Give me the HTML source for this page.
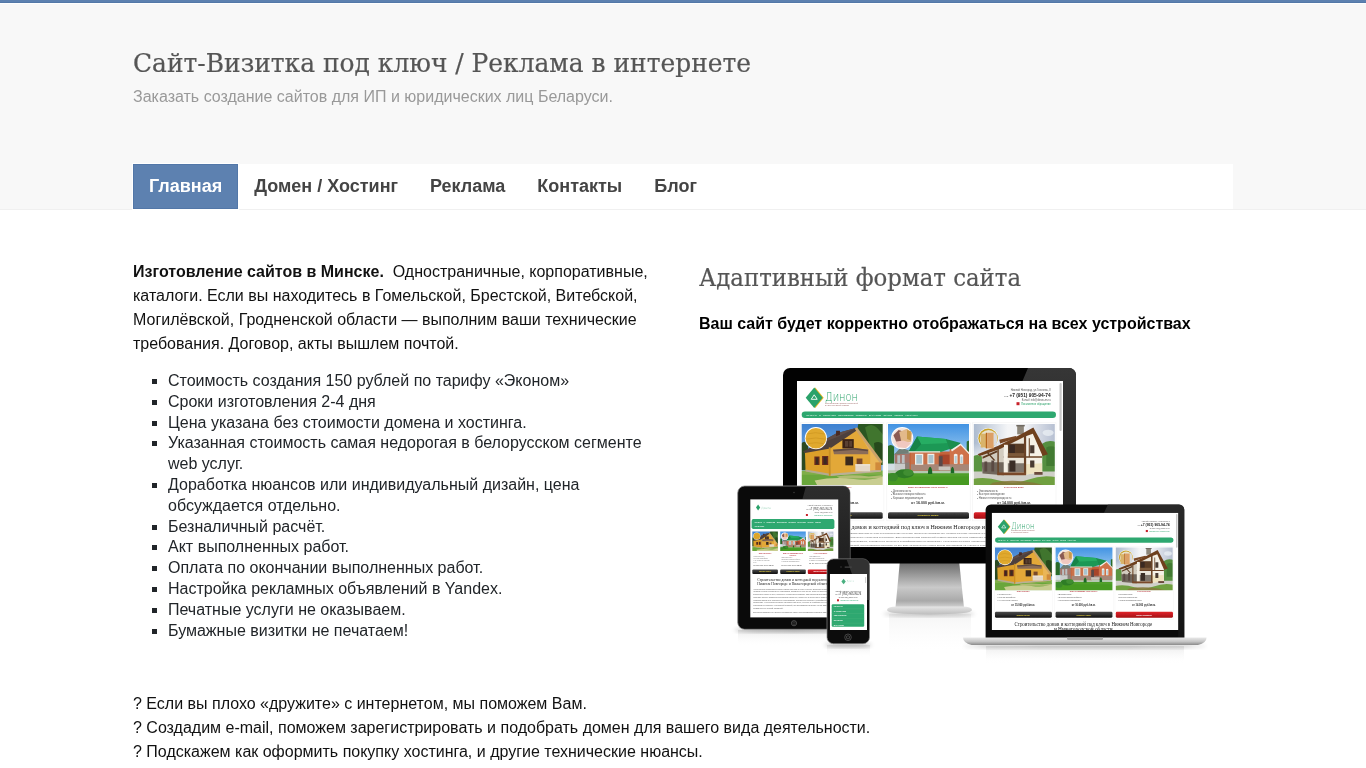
<!DOCTYPE html>
<html lang="ru">
<head>
<meta charset="utf-8">
<title>Сайт-Визитка под ключ / Реклама в интернете</title>
<style>
*{box-sizing:border-box}
html,body{margin:0;padding:0}
body{width:1366px;height:768px;overflow:hidden;background:#fff;font-family:"Liberation Sans",Arial,sans-serif;font-size:16px;color:#111;position:relative}
#top{position:absolute;left:0;top:0;width:1366px;height:210px;background:#f8f8f8;border-bottom:1px solid #f0f0f0}
#top:before{content:"";position:absolute;left:0;top:0;width:100%;height:4px;background:linear-gradient(#5d81b0 0,#5d81b0 2px,#5378a8 2px,#5378a8 3px,#fff 3px,#fff 4px)}
#title{position:absolute;left:133px;top:44px;width:640px;height:36px}
#title text{font-family:"DejaVu Serif Condensed","DejaVu Serif","Liberation Serif",serif;font-size:25.5px;fill:#555;stroke:#555;stroke-width:.2px}
#sub{position:absolute;left:133px;top:87px;font-size:16px;line-height:20px;color:#999;white-space:nowrap}
#nav{position:absolute;left:133px;top:164px;width:1100px;height:45px;background:#fff;display:flex}
#nav a{display:block;height:45px;line-height:45px;padding:0 16px;font-weight:bold;font-size:18px;color:#444;text-decoration:none;white-space:nowrap}
#nav a.on{background:#5d81b0;color:#fff;box-shadow:inset 0 0 0 1px #5277a8,0 0 0 1px #fff}
#left{position:absolute;left:133px;top:260px;width:540px}
#left p{margin:0;line-height:24px}
ul{margin:15px 0 0 0;padding:0 0 0 35px;list-style:square;line-height:20.8px;color:#212529}
#h2{position:absolute;left:699px;top:260px;width:400px;height:36px}
#h2 text{font-family:"DejaVu Serif Condensed","DejaVu Serif","Liberation Serif",serif;font-size:23.6px;fill:#555;stroke:#555;stroke-width:.2px}
#bold{position:absolute;left:699px;top:312px;font-weight:bold;line-height:24px;white-space:nowrap;color:#000}
#q{position:absolute;left:133px;top:692px;line-height:24px;white-space:nowrap}
#top,#left,#bold,#q,#h2{will-change:transform}
#pic{position:absolute;left:716px;top:340px;width:500px;height:333px}
</style>
</head>
<body>
<div id="top">
<svg id="title" viewBox="0 0 640 36"><text x="0" y="28" textLength="618" lengthAdjust="spacingAndGlyphs">Сайт-Визитка под ключ / Реклама в интернете</text></svg>
<div id="sub">Заказать создание сайтов для ИП и юридических лиц Беларуси.</div>
<div id="nav"><a class="on">Главная</a><a>Домен / Хостинг</a><a>Реклама</a><a>Контакты</a><a>Блог</a></div>
</div>
<div id="left">
<p><b>Изготовление сайтов в Минске.</b>&nbsp; Одностраничные, корпоративные, каталоги. Если вы находитесь в Гомельской, Брестской, Витебской, Могилёвской, Гродненской области — выполним ваши технические требования. Договор, акты вышлем почтой.</p>
<ul>
<li>Стоимость создания 150 рублей по тарифу «Эконом»</li>
<li>Сроки изготовления 2-4 дня</li>
<li>Цена указана без стоимости домена и хостинга.</li>
<li>Указанная стоимость самая недорогая в белорусском сегменте web услуг.</li>
<li>Доработка нюансов или индивидуальный дизайн, цена обсуждается отдельно.</li>
<li>Безналичный расчёт.</li>
<li>Акт выполненных работ.</li>
<li>Оплата по окончании выполненных работ.</li>
<li>Настройка рекламных объявлений в Yandex.</li>
<li>Печатные услуги не оказываем.</li>
<li>Бумажные визитки не печатаем!</li>
</ul>
</div>
<svg id="h2" viewBox="0 0 400 36"><text x="0" y="26" textLength="322" lengthAdjust="spacingAndGlyphs">Адаптивный формат сайта</text></svg>
<div id="bold">Ваш сайт будет корректно отображаться на всех устройствах</div>
<div id="q">? Если вы плохо «дружите» с интернетом, мы поможем Вам.<br>? Создадим e-mail, поможем зарегистрировать и подобрать домен для вашего вида деятельности.<br>? Подскажем как оформить покупку хостинга, и другие технические нюансы.</div>
<!--PICSTART--><svg id="pic" viewBox="716 340 500 333">
<defs>
<linearGradient id="sky1" x1="0" y1="0" x2="0" y2="1"><stop offset="0" stop-color="#3a7fd0"/><stop offset="1" stop-color="#a4c8ec"/></linearGradient>
<linearGradient id="sky2" x1="0" y1="0" x2="0" y2="1"><stop offset="0" stop-color="#3c8fe2"/><stop offset="0.7" stop-color="#bfe1f6"/></linearGradient>
<linearGradient id="sky3" x1="0" y1="0" x2="0" y2="1"><stop offset="0" stop-color="#c9d6e4"/><stop offset="0.6" stop-color="#f3f5f7"/></linearGradient>
<linearGradient id="sky3h" x1="0" y1="0" x2="1" y2="0"><stop offset="0" stop-color="#a9b8cd"/><stop offset=".42" stop-color="#f4f5f7"/><stop offset=".62" stop-color="#f1f2f5"/><stop offset="1" stop-color="#b3bdd0"/></linearGradient>
<linearGradient id="sky3v" x1="0" y1="0" x2="0" y2="1"><stop offset="0" stop-color="#f4f5f7" stop-opacity="0"/><stop offset="1" stop-color="#f4f5f7"/></linearGradient>
<linearGradient id="neck" x1="0" y1="0" x2="0" y2="1"><stop offset="0" stop-color="#6d6d6d"/><stop offset="0.55" stop-color="#c9c9c9"/><stop offset="0.85" stop-color="#a9a9a9"/><stop offset="1" stop-color="#d4d4d4"/></linearGradient>
<linearGradient id="plate" x1="0" y1="0" x2="0" y2="1"><stop offset="0" stop-color="#e6e6e6"/><stop offset="1" stop-color="#bdbdbd"/></linearGradient>
<linearGradient id="glare" x1="0" y1="0" x2="0" y2="1"><stop offset="0" stop-color="#363636"/><stop offset="1" stop-color="#161616"/></linearGradient>
<linearGradient id="lapbase" x1="0" y1="0" x2="0" y2="1"><stop offset="0" stop-color="#e9e9e9"/><stop offset="0.55" stop-color="#c4c4c4"/><stop offset="1" stop-color="#8a8a8a"/></linearGradient>
<linearGradient id="refl" x1="0" y1="0" x2="0" y2="1"><stop offset="0" stop-color="#cfcfcf" stop-opacity=".75"/><stop offset="1" stop-color="#fff" stop-opacity="0"/></linearGradient>
<linearGradient id="btn" x1="0" y1="0" x2="0" y2="1"><stop offset="0" stop-color="#4a4a4a"/><stop offset="1" stop-color="#121212"/></linearGradient>
<linearGradient id="btnr" x1="0" y1="0" x2="0" y2="1"><stop offset="0" stop-color="#e0242b"/><stop offset="1" stop-color="#a50d13"/></linearGradient>
<filter id="soft" x="-5%" y="-5%" width="110%" height="110%"><feGaussianBlur stdDeviation="0.62"/></filter>
<filter id="soft2" x="-20%" y="-50%" width="140%" height="200%"><feGaussianBlur stdDeviation="2"/></filter>
<filter id="pblur" x="-5%" y="-5%" width="110%" height="110%"><feGaussianBlur stdDeviation="0.45"/></filter>
<clipPath id="c81"><rect x="0" y="0" width="81" height="61"/></clipPath>


<g id="ph1" clip-path="url(#c81)"><g filter="url(#pblur)">
<rect x="-2" y="-2" width="85" height="65" fill="url(#sky1)"/>
<g transform="scale(.1292) translate(-30 -33)">
<path d="M470 20h200v330H560L470 200q-30-60-10-120z" fill="#2c5722"/>
<path d="M520 60q50-40 90 0t50 60v160h-80z" fill="#41742f"/>
<path d="M590 180q40-20 70 10v120h-60z" fill="#25491c"/>
<path d="M20 190q30-40 60 0v200H20z" fill="#2b4a22"/>
<path d="M20 395h650v120H20z" fill="#69a63a"/>
<path d="M20 395h650v30H20z" fill="#7fae4a"/>
<path d="M130 470q150-30 300-12t230-20v70H150z" fill="#d9d3a0" opacity=".85"/>
<path d="M300 440q120-20 250 0l100-10v25H330z" fill="#cfc48c" opacity=".7"/>
<path d="M55 250 250 212 250 432 60 398z" fill="#dc9f2b"/>
<path d="M60 385 250 418 250 436 60 400z" fill="#b3aa90"/>
<path d="M250 214 455 76 642 330 642 400 250 434z" fill="#e3a838"/>
<path d="M455 76 642 330 642 400 560 405 560 250z" fill="#eab658"/>
<path d="M250 418 640 388 640 402 250 436z" fill="#b9b098"/>
<path d="M40 246 300 104 458 62 470 74 250 222 56 258z" fill="#4e403c"/>
<path d="M120 205 300 104 458 62 300 135z" fill="#5d4c46"/>
<path d="M440 70 458 58 655 325 640 340z" fill="#caa36a"/>
<path d="M296 86h30v30l-30 12z" fill="#4a2a24"/>
<path d="M345 150h88v72h-88z" fill="#3a2418"/>
<path d="M365 165h25v45h-25zM398 165h22v45h-22z" fill="#5a4030"/>
<path d="M272 232 440 218 545 232 545 268 280 268z" fill="#8a6c58"/>
<path d="M272 232 440 218 545 232 540 244 440 232 280 246z" fill="#5e4a40"/>
<path d="M128 285h40v66h-40zM188 280h48v70h-48z" fill="#6a2c1c"/>
<path d="M140 292h18v52h-18zM200 288h24v56h-24z" fill="#3a2a22"/>
<path d="M368 285h60v68h-60z" fill="#3a2a1e"/>
<path d="M455 300h45v60h-45z" fill="#7a4a2a"/>
<path d="M445 345h115v55H445z" fill="#e4d8c8"/>
<path d="M445 345h115v8H445z" fill="#f4ece0"/>
<path d="M240 214h14v220h-14z" fill="#c98f24"/>
<path d="M600 330h45v60h-45z" fill="#d08a3a"/>
<circle cx="140" cy="143" r="86" fill="#fff"/><circle cx="140" cy="143" r="80" fill="#e0a92e"/>
<path d="M75 110q60-20 130 0M68 150q70-18 144 0M80 185q60-15 120 0" stroke="#c8901e" stroke-width="7" fill="none" opacity=".6"/>
</g></g></g>


<g id="ph2" clip-path="url(#c81)"><g filter="url(#pblur)">
<rect x="-2" y="-2" width="85" height="65" fill="url(#sky2)"/>
<g transform="scale(.1292) translate(-703 -33)">
<path d="M695 210q30-30 55 0v130h-55zM1312 170q15-15 30 0v215h-30z" fill="#2a6a2a"/>
<path d="M695 395h650v120H695z" fill="#4f9f2a"/>
<path d="M695 440h650v75H695z" fill="#479a24"/>
<path d="M695 388h650v26H695z" fill="#b5c8b0"/>
<path d="M755 262h120v130H755z" fill="#8d8078"/>
<path d="M755 262h120v70H755z" fill="#a5746a"/>
<path d="M870 245h460v148H870z" fill="#c4643a"/>
<path d="M880 250h225v145H880z" fill="#c9714a"/>
<path d="M1100 270h90v100h-90z" fill="#a8452c"/>
<path d="M1180 228 1265 192 1328 262 1328 390 1180 390z" fill="#cf7248"/>
<path d="M880 345h450v48H880z" fill="#9a8f88" opacity=".75"/>
<path d="M695 340h140v52H695z" fill="#d8dde0" opacity=".8"/>
<path d="M748 272 800 214 872 240 872 262 760 268z" fill="#6f7f78"/>
<path d="M862 248 928 130 1152 150 1215 215 1105 252z" fill="#1e9855"/>
<path d="M928 130 1152 150 1180 180 960 190z" fill="#27ad64"/>
<path d="M862 248 928 130 960 190 905 250z" fill="#178448"/>
<path d="M1150 150 1268 180 1205 232 1180 228z" fill="#1a8e4e"/>
<path d="M1190 232 1265 184 1335 258 1335 272 1265 198 1198 246z" fill="#f1efe8"/>
<path d="M862 244h245v10H862z" fill="#f0ece4"/>
<path d="M912 264h64v84h-64zM1008 264h54v80h-54z" fill="#f2f0ea"/>
<path d="M922 272h44v68h-44zM1016 272h38v64h-38z" fill="#a9c4cf"/>
<path d="M1096 282h30v80h-30z" fill="#5a4a48"/>
<path d="M1213 270q14-14 28 0v70h-28zM1259 274q13-13 26 0v66h-26z" fill="#f2f0ea"/>
<path d="M1219 280h16v54h-16zM1264 284h16v50h-16z" fill="#b5cdd6"/>
<path d="M775 275h22v62h-22zM810 272h22v64h-22z" fill="#b9c0c4"/>
<path d="M1095 362h90v28h-90z" fill="#c9c4bc"/>
<ellipse cx="830" cy="418" rx="72" ry="34" fill="#2f7d27"/><ellipse cx="740" cy="445" rx="40" ry="32" fill="#3a8a2c"/><ellipse cx="860" cy="410" rx="40" ry="26" fill="#3f8e30"/>
<path d="M1012 420q0-50 17-56 17 6 17 56zM1188 415q0-46 14-52 14 6 14 52z" fill="#1f6a25"/>
<circle cx="813" cy="143" r="86" fill="#fff"/><circle cx="813" cy="143" r="80" fill="#f3e4dc"/>
<path d="M745 120l40-40 30 10v70l-40 30z" fill="#8a5a52"/><path d="M790 95l60-25 40 30-10 70-70 20z" fill="#e2b98a"/><path d="M760 170l60-10 60 20-40 40-60-10z" fill="#f0c8c0"/><path d="M850 80l30 10v70l-30-10z" fill="#c99a4a"/>
</g></g></g>


<g id="ph3" clip-path="url(#c81)"><g filter="url(#pblur)">
<rect x="-2" y="-2" width="85" height="65" fill="#eef1f4"/>
<g transform="scale(.09234) translate(-45 -45)">
<path d="M30 30h910v400H30z" fill="url(#sky3h)"/>
<path d="M30 250h910v200H30z" fill="url(#sky3v)"/>
<ellipse cx="850" cy="140" rx="60" ry="34" fill="#e9edf2" opacity=".8"/>
<path d="M785 260q60-50 150-20v340H785z" fill="#548f40"/>
<path d="M830 300q50-30 105 0v200H830z" fill="#437a33"/>
<path d="M30 400q50-40 110 0v180H30z" fill="#5a9440"/>
<path d="M30 560h910v170H30z" fill="#cfcfc8"/>
<path d="M30 640q150-30 300 20t300-10 300-30v110H30z" fill="#6fa040"/>
<path d="M250 680q200-40 450 0l150 40H200z" fill="#86783a" opacity=".85"/>
<path d="M130 350 370 300 370 600 140 580z" fill="#d2ccbf"/>
<path d="M130 460 370 460 370 600 140 580z" fill="#6f665c"/>
<path d="M370 240 600 160 600 595 370 600z" fill="#ebe6da"/>
<path d="M410 470h190v100H410z" fill="#80776d"/>
<path d="M600 165 690 125 785 365 785 565 600 595z" fill="#f5f1e6"/>
<path d="M600 480 785 470 785 565 600 595z" fill="#efe3c0"/>
<path d="M515 62h72v95h-72z" fill="#8d867a"/><path d="M505 55h92v16h-92z" fill="#6f6a62"/>
<path d="M85 372 310 280 500 185 690 84 848 372 790 392 684 150 600 180 335 312 110 392z" fill="#6e3f1f"/>
<path d="M320 215 500 175 520 195 330 255z" fill="#7a4a28"/>
<path d="M415 258h178v145H415z" fill="#5a3d28"/>
<path d="M430 270h60v90h-60z" fill="#3a2a20"/>
<path d="M410 360h190v45H410z" fill="#7d5a3a"/>
<path d="M588 160h24v435h-24zM370 395h415v16H370zM300 300h16v295h-16zM640 200h12v200h-12z" fill="#6a4326"/>
<path d="M140 400 300 330 300 350 140 420zM200 350l80 90h-20l-80-90z" fill="#5e3c22"/>
<path d="M655 275h46v86h-46zM655 440h46v76h-46z" fill="#4a3a30"/>
<path d="M430 440h66v120h-66z" fill="#3a2e28"/>
<path d="M160 450h30v110h-30zM235 440h30v120h-30z" fill="#5a4a42"/>
<path d="M372 270h40v310h-40z" fill="#f4f0e6"/>
<path d="M300 570h310v30H300z" fill="#7a4a2a"/>
<path d="M700 565h90v30h-90z" fill="#6a4a3a"/>
<circle cx="200" cy="200" r="113" fill="#fff" opacity=".9"/><circle cx="200" cy="200" r="106" fill="#c9a227"/>
<circle cx="205" cy="205" r="96" fill="#e9e2cc"/>
<path d="M120 150h60v150h-60z" fill="#d9b36a"/><path d="M190 140h70v170h-70z" fill="#dca066"/><path d="M175 140h14v170h-14z" fill="#b5651e"/><path d="M262 150h30v130h-30z" fill="#d8dade"/>
</g></g></g>

<g id="s_head">
<path d="M18.300 6.400 26.700 16.750 18.300 27.100 9.800 16.750z" fill="#e9b820"/>
<path d="M17.200 6.400 25.600 16.750 17.200 27.100 8.700 16.750z" fill="#2aa26a"/>
<path d="M17.200 13.800 20.200 18.300h-6z" fill="none" stroke="#fff" stroke-width=".9"/>
<text x="28" y="20.400" font-size="11.500" textLength="33" lengthAdjust="spacingAndGlyphs" fill="#27a067" font-family="'DejaVu Sans Light','DejaVu Sans','Liberation Sans',sans-serif" font-weight="200">Динон</text>
<text x="28" y="22.900" font-size="2.200" textLength="33" lengthAdjust="spacingAndGlyphs" fill="#9a6462" font-family="'Liberation Sans',sans-serif">Строительство домов и коттеджей</text>
<text x="28" y="25" font-size="2.200" textLength="24" lengthAdjust="spacingAndGlyphs" fill="#9a6462" font-family="'Liberation Sans',sans-serif">в Нижегородской области</text>
<g font-family="'Liberation Sans',sans-serif" text-anchor="end">
<text x="253.600" y="10" font-size="2.600" fill="#555">Нижний Новгород, ул.Гоголева, 8</text>
<text x="253.600" y="15.800" font-size="4.800" fill="#222" font-weight="bold"><tspan font-size="2.400" font-weight="normal" fill="#555">тел. </tspan>+7 (951) 905-94-74</text>
<text x="253.600" y="19.800" font-size="2.600" fill="#555">E-mail: info@dinon-nn.ru</text>
<text x="253.600" y="23.600" font-size="2.600" fill="#2aa26a">Письменное обращение</text>
</g>
<rect x="219.500" y="21.200" width="3" height="3" fill="#c8202a"/>
</g>
<g id="s_nav">
<rect x="4.700" y="30.500" width="254.300" height="6.600" rx="3.300" fill="#2fa86f"/>
<text x="9.400" y="34.700" font-size="2.500" textLength="111" lengthAdjust="spacingAndGlyphs" fill="#fff" font-family="'Liberation Sans',sans-serif" word-spacing="2">ГЛАВНАЯ О КОМПАНИИ ТЕХНОЛОГИИ ПРОЕКТЫ ВАКАНСИИ СТАТЬИ УСЛУГИ КОНТАКТЫ</text>
</g>
<g id="s_prod">
<use href="#ph1" x="4.700" y="43"/><use href="#ph2" x="91" y="43"/><use href="#ph3" x="176.800" y="43"/>
</g>
<g id="s_cap" font-family="'Liberation Sans',sans-serif" font-size="2.700" fill="#555">
<g text-anchor="middle" fill="#b5323a" font-weight="bold" font-size="2.050"><text x="45" y="107.200">ДОМА ИЗ БРЕВНА</text><text x="131" y="107.200">ДОМА ИЗ ОБЛИЦОВОЧНОГО КИРПИЧА</text><text x="217" y="107.200">КАРКАСНЫЕ ДОМА</text></g>
<text x="8" y="110.800">▪ Экологичность</text><text x="8" y="114.300">▪ Уютная атмосфера</text><text x="8" y="117.800">▪ Не требуется отделка</text>
<text x="94" y="110.800">▪ Долговечность</text><text x="94" y="114.300">▪ Высокая пожаростойкость</text><text x="94" y="117.800">▪ Хорошая звукоизоляция</text>
<text x="180" y="110.800">▪ Экономичность</text><text x="180" y="114.300">▪ Быстрое возведение</text><text x="180" y="117.800">▪ Низкая теплопроводность</text>
<g text-anchor="middle" fill="#333" font-weight="bold" font-size="3.600"><text x="45" y="123.400">от 15.000 руб./кв.м.</text><text x="131" y="123.400">от 16.000 руб./кв.м.</text><text x="217" y="123.400">от 14.000 руб./кв.м.</text></g>
</g>
<g id="s_btn">
<rect x="4.700" y="131.200" width="81" height="6.600" rx="1.600" fill="url(#btn)"/><rect x="91" y="131.200" width="81" height="6.600" rx="1.600" fill="url(#btn)"/><rect x="176.800" y="131.200" width="81.400" height="6.600" rx="1.600" fill="url(#btnr)"/>
<g font-family="'Liberation Sans',sans-serif" font-size="2.400" font-weight="bold" text-anchor="middle"><text x="45" y="135.400" fill="#e8d23a">Заказать проект</text><text x="131" y="135.400" fill="#e8d23a">Отправить заявку</text><text x="217" y="135.400" fill="#fff">Другие технологии</text></g>
</g>
<g id="s_text">
<text x="133" y="147.600" font-size="6.100" text-anchor="middle" fill="#222" font-family="'Liberation Serif',serif" textLength="236" lengthAdjust="spacingAndGlyphs">Строительство домов и коттеджей под ключ в Нижнем Новгороде и Нижегородской области</text>
<g font-family="'Liberation Sans',sans-serif" font-size="2.450" fill="#666">
<text x="6" y="153.400" textLength="254" lengthAdjust="spacingAndGlyphs">Наша молодая компания предлагает своим клиентам лучшие технологические решения. Особенное внимание мы уделяем качеству строительных материалов, подбирая лучшие из них. Опытные мастера</text>
<text x="6" y="157.100" textLength="254" lengthAdjust="spacingAndGlyphs">выполняют работы быстро и в срок, полностью соблюдая технологию. Для строительства загородной резиденции или дачного домика мы предлагаем каркасные, кирпичные и бревенчатые дома</text>
<text x="6" y="160.800" textLength="254" lengthAdjust="spacingAndGlyphs">Компания использует современное оборудование, собственные проекты и сертифицированные материалы. Консультируем также строительство бань, беседок и хозяйственных построек на участке</text>
<text x="6" y="164.500" textLength="254" lengthAdjust="spacingAndGlyphs">Работаем по договору с поэтапной оплатой, предоставляем гарантию на все виды выполненных работ. Выезд специалиста на участок и составление сметы осуществляется бесплатно для клиента</text>
</g>
</g>
<g id="site">
<rect width="266" height="170" fill="#fff"/>
<use href="#s_head"/><use href="#s_nav"/>
<g fill="none" stroke="#f2f2f2" stroke-width=".6"><rect x="3.500" y="41.800" width="83.400" height="98"/><rect x="89.800" y="41.800" width="83.400" height="98"/><rect x="175.600" y="41.800" width="83.400" height="98"/></g>
<use href="#s_prod"/><use href="#s_cap"/><use href="#s_btn"/><use href="#s_text"/>
<rect x="262.500" y="2" width="2.200" height="48" rx="1" fill="#c9c9c9"/>
</g>
<g id="sitelap">
<rect width="266" height="170" fill="#fff"/>
<use href="#s_head" y="3.400"/>
<use href="#s_nav" transform="translate(0 1.850) scale(1 1.100)"/>
<g fill="none" stroke="#f2f2f2" stroke-width=".6"><rect x="3.500" y="48" width="83.400" height="104"/><rect x="89.800" y="48" width="83.400" height="104"/><rect x="175.600" y="48" width="83.400" height="104"/></g>
<use href="#s_prod" y="6.400"/>
<use href="#s_cap" transform="translate(0 -11.800) scale(1 1.170)"/>
<use href="#s_btn" transform="translate(0 -25.400) scale(1 1.270)"/>
<g font-family="'Liberation Serif',serif" font-size="7.600" fill="#222" text-anchor="middle"><text x="130.500" y="161.200" textLength="196" lengthAdjust="spacingAndGlyphs">Строительство домов и коттеджей под ключ в Нижнем Новгороде</text><text x="130.500" y="168.600">и Нижегородской области</text></g>
<rect x="262.500" y="2" width="2.200" height="48" rx="1" fill="#c9c9c9"/>
</g>

<g id="sitepad">
<rect width="88" height="118" fill="#fff"/>
<path d="M7.8 5.2 9.9 8.1 7.8 11 5.7 8.1z" fill="#2aa26a"/>
<text x="11" y="9.4" font-size="3.2" fill="#2aa26a" fill-opacity=".65" font-family="'DejaVu Sans Light','DejaVu Sans','Liberation Sans',sans-serif" font-weight="200" textLength="9.5" lengthAdjust="spacingAndGlyphs">Динон</text>
<g font-family="'Liberation Sans',sans-serif" text-anchor="end"><text x="82" y="6.6" font-size="1.6" fill="#555">Нижний Новгород, ул.Гоголева, 8</text><text x="82" y="10.4" font-size="2.7" fill="#2a2a2a"><tspan font-size="1.500" font-weight="normal">тел. </tspan>+7 (951) 905-94-74</text><text x="82" y="13.6" font-size="1.6" fill="#555">E-mail: info@dinon-nn.ru</text><text x="82" y="16.4" font-size="1.6" fill="#2aa26a">Письменное обращение</text></g>
<rect x="55.6" y="14.6" width="2" height="2" fill="#c8202a"/>
<rect x="1.3" y="19.7" width="82.8" height="10" rx="1.8" fill="#2fa86f"/>
<g font-family="'Liberation Sans',sans-serif" font-size="1.7" font-weight="bold" fill="#fff"><text x="4.5" y="23.6" textLength="66" lengthAdjust="spacingAndGlyphs" word-spacing="1.5">ГЛАВНАЯ О КОМПАНИИ ТЕХНОЛОГИИ ПРОЕКТЫ ВАКАНСИИ СТАТЬИ УСЛУГИ</text><text x="4.5" y="27.8">КОНТАКТЫ</text></g>
<use href="#ph1" transform="translate(2 32.2) scale(.316 .32)"/><use href="#ph2" transform="translate(29.9 32.2) scale(.316 .32)"/><use href="#ph3" transform="translate(57.5 32.2) scale(.316 .32)"/>
<g font-family="'Liberation Sans',sans-serif" font-size="1.5" fill="#777">
<g text-anchor="middle" fill="#b5323a" font-weight="bold" font-size="1.4"><text x="14.8" y="54.4">ДОМА ИЗ БРЕВНА</text><text x="42.7" y="54.4">ДОМА ИЗ ОБЛИЦОВОЧНОГО</text><text x="42.7" y="56.3">КИРПИЧА</text><text x="70.3" y="54.4">КАРКАСНЫЕ ДОМА</text></g>
<text x="3" y="57.2">▪ Экологичность</text><text x="3" y="59.4">▪ Уютная атмосфера</text><text x="3" y="61.6">▪ Не требуется отделка</text><text x="3" y="63.6">стен</text>
<text x="31" y="58.6">▪ Долговечность</text><text x="31" y="60.8">▪ Высокая пожаростойкость</text><text x="31" y="63">▪ Хорошая звукоизоляция</text>
<text x="58.6" y="57.2">▪ Экономичность</text><text x="58.6" y="59.4">▪ Быстрое возведение</text><text x="58.6" y="61.6">▪ Низкая теплопроводность</text>
<g fill="#444" font-size="2.3"><text x="3" y="67">от 15.000 руб./кв.м.</text><text x="31" y="67">от 16.000 руб./кв.м.</text><text x="58.6" y="64.6">от 14.000 руб./кв.м.</text></g>
</g>
<rect x="2" y="70" width="25.6" height="4.6" rx="1" fill="url(#btn)"/><rect x="29.9" y="70" width="25.6" height="4.6" rx="1" fill="url(#btn)"/><rect x="57.5" y="70" width="25.8" height="4.6" rx="1" fill="url(#btnr)"/>
<g font-family="'Liberation Sans',sans-serif" font-size="1.5" font-weight="bold" text-anchor="middle"><text x="14.8" y="72.9" fill="#e8d23a">Заказать проект</text><text x="42.7" y="72.9" fill="#e8d23a">Отправить заявку</text><text x="70.3" y="72.9" fill="#fff">Другие технологии</text></g>
<g font-family="'Liberation Serif',serif" font-size="4.4" fill="#222" text-anchor="middle"><text x="43" y="81.6" textLength="72" lengthAdjust="spacingAndGlyphs">Строительство домов и коттеджей под ключ в</text><text x="43" y="85.8" textLength="72" lengthAdjust="spacingAndGlyphs">Нижнем Новгороде и Нижегородской области</text></g>
<g font-family="'Liberation Sans',sans-serif" font-size="1.8" fill="#5a5a5a">
<text x="3" y="90.4" textLength="80" lengthAdjust="spacingAndGlyphs">Наша молодая компания предлагает своим клиентам лучшие решения. Особенное внимание мы</text>
<text x="3" y="93.1" textLength="80" lengthAdjust="spacingAndGlyphs">уделяем качеству строительных материалов, подбирая лучшие из них. Опытные мастера быстро</text>
<text x="3" y="95.8" textLength="80" lengthAdjust="spacingAndGlyphs">выполняют работы в срок, полностью соблюдая технологию. Для строительства загородного</text>
<text x="3" y="98.5" textLength="80" lengthAdjust="spacingAndGlyphs">дома или дачного домика мы предлагаем каркасные, кирпичные и бревенчатые дома под ключ</text>
<text x="3" y="101.2" textLength="80" lengthAdjust="spacingAndGlyphs">Компания использует современное оборудование, собственные проекты и сертифицированные</text>
<text x="3" y="103.9" textLength="80" lengthAdjust="spacingAndGlyphs">материалы. Консультируем также строительство бань, беседок и хозяйственных построек</text>
<text x="3" y="106.6" textLength="80" lengthAdjust="spacingAndGlyphs">Работаем по договору с поэтапной оплатой, предоставляем гарантию на все виды работ</text>
<text x="3" y="109.3" textLength="30" lengthAdjust="spacingAndGlyphs">выполненных нашей бригадой.</text>
<text x="3" y="114" textLength="80" lengthAdjust="spacingAndGlyphs">Выезд специалиста на участок и составление сметы осуществляется бесплатно для клиента</text>
</g>
</g>

<g id="sitephone">
<rect width="37.200" height="56.100" fill="#fff"/>
<path d="M13.800 4.900 16 7.600 13.800 10.300 11.600 7.600z" fill="#2aa26a" opacity=".85"/>
<text x="16.800" y="8.500" font-size="2.600" fill="#2aa26a" fill-opacity=".6" font-family="'DejaVu Sans Light','DejaVu Sans','Liberation Sans',sans-serif" font-weight="200" textLength="7.500" lengthAdjust="spacingAndGlyphs">Динон</text>
<g font-family="'Liberation Sans',sans-serif" text-anchor="middle"><text x="18.400" y="17.700" font-size="1.700" fill="#444">Нижний Новгород, ул.Гоголева, 8</text><text x="18.400" y="21.500" font-size="2.700" fill="#222"><tspan font-size="1.500" font-weight="normal">тел. </tspan>+7 (951) 905-94-74</text><text x="18.400" y="24.400" font-size="1.700" fill="#444">E-mail: info@dinon-nn.ru</text><text x="19.600" y="27" font-size="1.600" fill="#2aa26a">Письменное обращение</text></g>
<rect x="7.200" y="25.400" width="2" height="2" fill="#c8202a"/>
<rect x="1.900" y="30.400" width="32.500" height="22.500" rx="1.200" fill="#2fa86f"/>
<g font-family="'Liberation Sans',sans-serif" font-size="1.800" font-weight="bold" fill="#fff"><text x="4" y="32.900">ГЛАВНАЯ</text><text x="4" y="37.700">О КОМПАНИИ</text><text x="4" y="42.500">ТЕХНОЛОГИИ</text><text x="4" y="47.400">ПРОЕКТЫ</text><text x="4" y="52.200">ВАКАНСИИ</text></g>
<g stroke="#4db886" stroke-width=".3"><path d="M1.900 34.800h32.500M1.900 39.600h32.500M1.900 44.500h32.500M1.900 49.300h32.500"/></g>
<rect x="35.300" y="3" width="1" height="6" rx=".5" fill="#ccc"/>
</g>
</defs>
<clipPath id="cmon"><rect x="797" y="381" width="266" height="166"/></clipPath>
<clipPath id="cmonb"><path d="M790 368h279a7 7 0 0 1 7 7v188.500H783V375a7 7 0 0 1 7-7zM797 381v166h266V381z" clip-rule="evenodd"/></clipPath>
<clipPath id="cpad"><rect x="750.300" y="499.400" width="88" height="118"/></clipPath>
<clipPath id="cpadb"><rect x="737.700" y="486" width="112.300" height="143.300" rx="7"/></clipPath>
<clipPath id="cph"><rect x="829.800" y="573.900" width="37.200" height="56.100"/></clipPath>
<clipPath id="clap"><rect x="991.700" y="512.700" width="186.700" height="117.300"/></clipPath>

<rect x="889" y="614" width="82" height="40" fill="url(#refl)" opacity=".3"/>
<rect x="738" y="630" width="112" height="16" fill="url(#refl)" opacity=".6"/>
<rect x="827" y="645" width="43" height="12" fill="url(#refl)" opacity=".6"/>
<rect x="986" y="646" width="198" height="18" fill="url(#refl)" opacity=".55"/>
<ellipse cx="794" cy="630" rx="60" ry="2" fill="#000" opacity=".35" filter="url(#soft2)"/>
<ellipse cx="848" cy="645" rx="24" ry="1.600" fill="#000" opacity=".35" filter="url(#soft2)"/>
<ellipse cx="1085" cy="646" rx="122" ry="1.600" fill="#000" opacity=".3" filter="url(#soft2)"/>
<ellipse cx="929" cy="614" rx="46" ry="2" fill="#000" opacity=".25" filter="url(#soft2)"/>

<path d="M899.700 563h59.600l4.700 44.500h-68.500z" fill="url(#neck)"/>
<path d="M887 610q0-3.500 10-3.500h65q10 0 10 3.500 0 4.400-42.500 4.400T887 610z" fill="url(#plate)"/>
<path d="M790 368h279a7 7 0 0 1 7 7v188.500H783V375a7 7 0 0 1 7-7z" fill="#020202"/>
<g clip-path="url(#cmonb)"><path d="M1028 368h50v196h-16V381h-39.500z" fill="url(#glare)"/></g>
<g clip-path="url(#cmon)"><g filter="url(#soft)"><use href="#site" x="797" y="381"/></g></g>

<rect x="737.700" y="486" width="112.300" height="143.300" rx="7" fill="#0a0a0a" stroke="#8f8f8f" stroke-width=".8"/>
<g clip-path="url(#cpadb)"><path d="M806 486h45v144h-12.500V499h-36z" fill="url(#glare)" opacity=".8"/></g>
<circle cx="794" cy="492.500" r=".8" fill="#3a3a3a"/>
<g clip-path="url(#cpad)"><g filter="url(#soft)"><use href="#sitepad" x="750.300" y="499.400"/></g></g>
<circle cx="794" cy="623.200" r="2.600" fill="none" stroke="#777" stroke-width=".6"/><rect x="792.900" y="622.100" width="2.200" height="2.200" rx=".5" fill="none" stroke="#777" stroke-width=".4"/>

<path d="M991 504.500h188a5.300 5.300 0 0 1 5.300 5.300V638H985.600V509.800a5.400 5.400 0 0 1 5.400-5.300z" fill="#0b0b0b"/>
<path d="M1108 504.500h71a5.300 5.300 0 0 1 5.300 5.300V638h-6V512.700H1104z" fill="url(#glare)" opacity=".7"/>
<g clip-path="url(#clap)"><g filter="url(#soft)"><use href="#sitelap" transform="translate(991.700 512.700) scale(.702)"/></g></g>
<path d="M963 637.600h243.600q0 5.400-8.600 7.400H971.600q-8.600-2-8.600-7.400z" fill="url(#lapbase)"/>
<path d="M1067 637.600h36v1.200q0 1.200-1.500 1.200h-33q-1.500 0-1.500-1.200z" fill="#a3a3a3"/>

<rect x="827" y="558.900" width="42.500" height="84.800" rx="6.500" fill="#0c0c0c" stroke="#8a8a8a" stroke-width=".7"/>
<path d="M846.500 559.200h16.500a6.300 6.300 0 0 1 6.300 6.300V600h-2.300v-26.100h-15z" fill="#3a3a3a" opacity=".85"/>
<rect x="844.500" y="566.400" width="7.500" height="1.300" rx=".6" fill="#444"/><circle cx="841" cy="567" r=".7" fill="#444"/>
<g clip-path="url(#cph)"><g filter="url(#soft)"><use href="#sitephone" x="829.800" y="573.900"/></g></g>
<circle cx="848" cy="637.300" r="3.300" fill="none" stroke="#6a6a6a" stroke-width=".6"/><rect x="846.600" y="635.900" width="2.800" height="2.800" rx=".7" fill="none" stroke="#8a8a8a" stroke-width=".45"/>
</svg>
<!--PICEND-->
</body>
</html>
